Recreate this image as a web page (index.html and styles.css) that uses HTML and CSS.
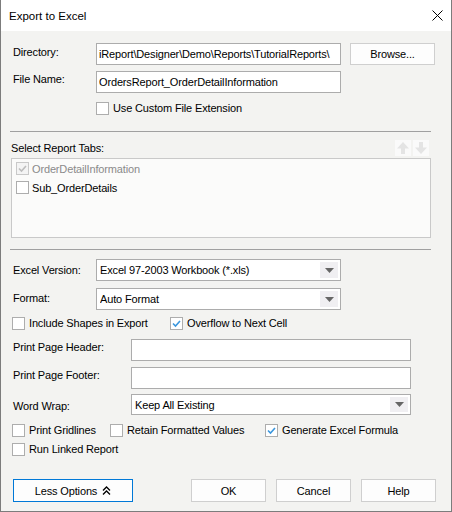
FILE: index.html
```html
<!DOCTYPE html>
<html>
<head>
<meta charset="utf-8">
<link rel="stylesheet" href="styles.css">
</head>
<body>
<div class="window">
  <div class="titlebar">
    <span class="title">Export to Excel</span>
    <svg class="close" width="11" height="11" viewBox="0 0 11 11"><path d="M0.5 0.5L10.5 10.5M10.5 0.5L0.5 10.5" stroke="#000" stroke-width="1" fill="none"/></svg>
  </div>
  <div class="content">
    <div class="row row-dir">
      <span class="lbl lbl-a p1">Directory:</span>
      <div class="field w245"><span class="txt">iReport\Designer\Demo\Reports\TutorialReports\</span></div>
      <button class="btn btn-browse">Browse...</button>
    </div>
    <div class="row row-file">
      <span class="lbl lbl-a p0">File Name:</span>
      <div class="field w245"><span class="txt">OrdersReport_OrderDetailInformation</span></div>
    </div>
    <div class="checkrow row-ext">
      <label class="chk"><span class="box"></span>Use Custom File Extension</label>
    </div>
    <div class="sep sep1"></div>
    <div class="tabs-head">
      <span class="lbl tabs-lbl">Select Report Tabs:</span>
      <div class="arrows">
        <span class="arrow"><svg width="16" height="16" viewBox="0 0 16 16"><path d="M8 2L14 8.5H10V14H6V8.5H2Z" fill="#e4e4e4"/></svg></span>
        <span class="arrow"><svg width="16" height="16" viewBox="0 0 16 16"><path d="M8 14L14 7.5H10V2H6V7.5H2Z" fill="#e4e4e4"/></svg></span>
      </div>
    </div>
    <div class="listbox">
      <div class="item item-dis"><span class="box box-dis"><svg width="11" height="11" viewBox="0 0 11 11"><path d="M2 5.5L4.5 8L9 3" stroke="#bdbdbd" stroke-width="1.6" fill="none"/></svg></span>OrderDetailInformation</div>
      <div class="item"><span class="box"></span>Sub_OrderDetails</div>
    </div>
    <div class="sep sep2"></div>
    <div class="row row-ver">
      <span class="lbl lbl-a p3">Excel Version:</span>
      <div class="field select w245"><span class="txt">Excel 97-2003 Workbook (*.xls)</span><span class="dd"><svg width="9" height="5" viewBox="0 0 9 5"><path d="M0 0H9L4.5 5Z" fill="#666"/></svg></span></div>
    </div>
    <div class="row row-fmt">
      <span class="lbl lbl-a p2">Format:</span>
      <div class="field select w245"><span class="txt">Auto Format</span><span class="dd"><svg width="9" height="5" viewBox="0 0 9 5"><path d="M0 0H9L4.5 5Z" fill="#666"/></svg></span></div>
    </div>
    <div class="checkrow row-c1">
      <label class="chk w158"><span class="box"></span>Include Shapes in Export</label>
      <label class="chk"><span class="box"><svg width="11" height="11" viewBox="0 0 11 11"><path d="M2 5.5L4.5 8L9 3" stroke="#3a96dd" stroke-width="1.6" fill="none"/></svg></span>Overflow to Next Cell</label>
    </div>
    <div class="row row-hdr">
      <span class="lbl lbl-b p0">Print Page Header:</span>
      <div class="field w280"></div>
    </div>
    <div class="row row-ftr">
      <span class="lbl lbl-b p0">Print Page Footer:</span>
      <div class="field w280"></div>
    </div>
    <div class="row row-wrap">
      <span class="lbl lbl-b p4">Word Wrap:</span>
      <div class="field select w280 h21"><span class="txt">Keep All Existing</span><span class="dd"><svg width="9" height="5" viewBox="0 0 9 5"><path d="M0 0H9L4.5 5Z" fill="#666"/></svg></span></div>
    </div>
    <div class="checkrow row-c2">
      <label class="chk w98"><span class="box"></span>Print Gridlines</label>
      <label class="chk w155"><span class="box"></span>Retain Formatted Values</label>
      <label class="chk"><span class="box"><svg width="11" height="11" viewBox="0 0 11 11"><path d="M2 5.5L4.5 8L9 3" stroke="#3a96dd" stroke-width="1.6" fill="none"/></svg></span>Generate Excel Formula</label>
    </div>
    <div class="checkrow row-c3">
      <label class="chk"><span class="box"></span>Run Linked Report</label>
    </div>
    <div class="buttons">
      <button class="btn btn-less">Less Options <svg width="9" height="9" viewBox="0 0 9 9"><path d="M1 4.5L4.5 1L8 4.5M1 8.5L4.5 5L8 8.5" stroke="#000" stroke-width="1.3" fill="none"/></svg></button>
      <div class="btn-group">
        <button class="btn btn-std">OK</button>
        <button class="btn btn-std">Cancel</button>
        <button class="btn btn-std">Help</button>
      </div>
    </div>
  </div>
</div>
</body>
</html>
```

FILE: styles.css
```css
body {
  margin: 0;
  background: #ffffff;
  font-family: "Liberation Sans", Arial, sans-serif;
  font-size: 11px;
  color: #000;
}

.window {
  width: 452px;
  height: 512px;
  box-sizing: border-box;
  border: 1px solid #7c7c7c;
  border-top: none;
  background: #f3f3f1;
  display: flex;
  flex-direction: column;
}

.titlebar {
  height: 31px;
  flex: none;
  background: #ffffff;
  display: flex;
  align-items: center;
  justify-content: space-between;
  padding: 0 8px 0 8px;
  box-sizing: border-box;
}

.title {
  font-size: 11.5px;
  line-height: 16px;
}

.close {
  display: block;
  margin-top: -1px;
}

.content {
  padding: 12px 15px 0 11px;
  display: flex;
  flex-direction: column;
  letter-spacing: -0.15px;
}

.row {
  display: flex;
  align-items: flex-start;
}

.lbl {
  line-height: 16px;
  padding-left: 1px;
  flex: none;
  white-space: nowrap;
}

.lbl-a { width: 83px; }
.lbl-b { width: 118px; }
.p0 { padding-top: 0; }
.p1 { padding-top: 1px; }
.p2 { padding-top: 2px; }
.p3 { padding-top: 3px; }
.p4 { padding-top: 4px; }

.field {
  box-sizing: border-box;
  height: 22px;
  border: 1px solid #acacac;
  background: #ffffff;
  display: flex;
  align-items: center;
  padding: 0 2px;
  overflow: hidden;
  white-space: nowrap;
  flex: none;
}

.w245 { width: 245px; }
.w280 { width: 280px; }
.h21 { height: 21px; }

.txt {
  flex: 1;
  overflow: hidden;
  line-height: 16px;
}

.select {
  padding: 1px 1px 1px 3px;
  align-items: stretch;
}

.select .txt {
  display: flex;
  align-items: center;
}

.dd {
  width: 18px;
  flex: none;
  background: #f0eff2;
  display: flex;
  align-items: center;
  justify-content: center;
  margin: 1px 1px 1px 0;
}

.dd svg { display: block; }

.btn {
  box-sizing: border-box;
  height: 23px;
  border: 1px solid #cfcfcf;
  background: #fdfdfd;
  font-family: inherit;
  font-size: 11px;
  letter-spacing: -0.15px;
  color: #000;
  padding: 0;
  margin: 0;
}

.btn-browse {
  width: 85px;
  height: 22px;
  margin-left: 9px;
}

.row-dir { margin-top: 0; }
.row-file { margin-top: 6px; }

.checkrow {
  display: flex;
  align-items: center;
  height: 13px;
}

.row-ext {
  margin-top: 9px;
  padding-left: 84px;
}

.chk {
  display: flex;
  align-items: center;
  gap: 4px;
  height: 13px;
  line-height: 13px;
  white-space: nowrap;
  flex: none;
}

.w158 { width: 158px; }
.w98 { width: 98px; }
.w155 { width: 155px; }

.box {
  width: 13px;
  height: 13px;
  box-sizing: border-box;
  border: 1px solid #adadad;
  background: #ffffff;
  flex: none;
  display: flex;
  align-items: center;
  justify-content: center;
}

.box svg { display: block; }

.box-dis {
  border-color: #c9c9c9;
  background: #f4f4f4;
}

.sep {
  height: 1px;
  background: #a0a0a0;
  margin-left: -2px;
  width: 421px;
  flex: none;
}

.sep1 { margin-top: 16px; }
.sep2 { margin-top: 11px; }

.tabs-head {
  margin-top: 7px;
  height: 17px;
  width: 417px;
  display: flex;
  align-items: center;
  justify-content: space-between;
}

.tabs-lbl {
  margin-left: -1px;
  padding-left: 0;
}

.arrows {
  display: flex;
  gap: 2px;
}

.arrow {
  width: 16px;
  height: 16px;
  background: #fafafa;
  display: block;
}

.arrow svg { display: block; }

.listbox {
  margin-top: 2px;
  margin-left: -1px;
  width: 420px;
  height: 80px;
  box-sizing: border-box;
  border: 1px solid #c9c9c9;
  background: #fbfbfa;
  padding: 0 4px;
}

.item {
  height: 19px;
  display: flex;
  align-items: center;
  gap: 3px;
  white-space: nowrap;
}

.item-dis {
  color: #8a8a8a;
}

.row-ver { margin-top: 9px; }
.row-fmt { margin-top: 7px; }
.row-c1 { margin-top: 7px; }
.row-hdr { margin-top: 9px; }
.row-ftr { margin-top: 6px; }
.row-wrap { margin-top: 5px; }
.row-c2 { margin-top: 9px; }
.row-c3 { margin-top: 6px; }

.buttons {
  margin-top: 23px;
  display: flex;
  justify-content: space-between;
  align-items: center;
}

.btn-less {
  width: 120px;
  margin-left: 1px;
  border-color: #0078d7;
  display: flex;
  align-items: center;
  justify-content: center;
  gap: 5px;
}

.btn-less svg { display: block; }

.btn-group {
  display: flex;
  gap: 10px;
}

.btn-std {
  width: 75px;
}
```
